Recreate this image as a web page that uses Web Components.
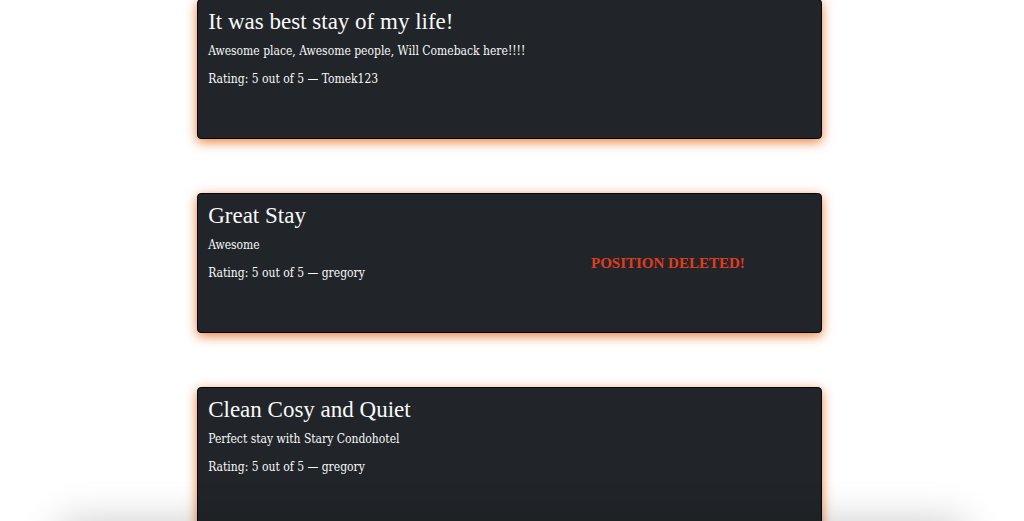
<!DOCTYPE html>
<html lang="en">
<head>
<meta charset="utf-8">
<meta name="viewport" content="width=device-width, initial-scale=1">
<title>Guest reviews</title>
<style>
  body { margin: 0; background: #fff; overflow: hidden; }
</style>
</head>
<body>
<review-list>
  <review-card rating="5" author="Tomek123">
    <span slot="title">It was best stay of my life!</span>
    Awesome place, Awesome people, Will Comeback here!!!!
  </review-card>
  <review-card rating="5" author="gregory">
    <span slot="title">Great Stay</span>
    Awesome
    <status-note slot="status">POSITION DELETED!</status-note>
  </review-card>
  <review-card rating="5" author="gregory">
    <span slot="title">Clean Cosy and Quiet</span>
    Perfect stay with Stary Condohotel
  </review-card>
</review-list>
<edge-shade></edge-shade>
<script>
  class BaseElement extends HTMLElement {
    constructor() {
      super();
      this.attachShadow({ mode: 'open' }).innerHTML = this.constructor.markup;
    }
  }

  customElements.define('review-list', class extends BaseElement {
    static markup = `
      <style>
        :host { display: block; padding-right: 5px; }
        main { display: grid; gap: 54px; width: 61.3%; margin: -1px auto 0; }
      </style>
      <main><slot></slot></main>`;
  });

  customElements.define('review-card', class extends BaseElement {
    static markup = `
      <style>
        :host { display: block; }
        article {
          box-sizing: border-box; display: flex; min-height: 140px;
          padding: 8px 10px; border: 1px solid #05070c; border-radius: 4px;
          background: #212529; color: #f8f9fa;
          box-shadow: 0 3px 12px #e87f3c;
        }
        .text { flex: 1; }
        h2 { margin: 0 0 7px; font: 400 23px/28px "Liberation Serif", serif; }
        p { margin: 0 0 12px; font: 400 12px/16px "DejaVu Serif Condensed", "DejaVu Serif", serif; }
        aside { display: flex; align-items: center; padding-right: 66px; }
      </style>
      <article>
        <div class="text">
          <h2><slot name="title"></slot></h2>
          <p><slot></slot></p>
          <p class="rating"></p>
        </div>
        <aside><slot name="status"></slot></aside>
      </article>`;

    connectedCallback() {
      this.shadowRoot.querySelector('.rating').textContent =
        `Rating: ${this.getAttribute('rating')} out of 5 — ${this.getAttribute('author')}`;
    }
  });

  customElements.define('status-note', class extends BaseElement {
    static markup = `
      <style>
        :host { display: block; color: #e03c1e; font: 700 15px/20px "Liberation Serif", serif; }
      </style>
      <slot></slot>`;
  });

  // Soft shade that rises from below the bottom edge of the window.
  customElements.define('edge-shade', class extends BaseElement {
    static markup = `
      <style>
        :host {
          position: fixed; top: 100%; left: 60px; right: 60px; height: 80px;
          box-shadow: 0 0 40px rgba(0, 0, 0, .2); pointer-events: none;
        }
      </style>`;
  });
</script>
</body>
</html>
